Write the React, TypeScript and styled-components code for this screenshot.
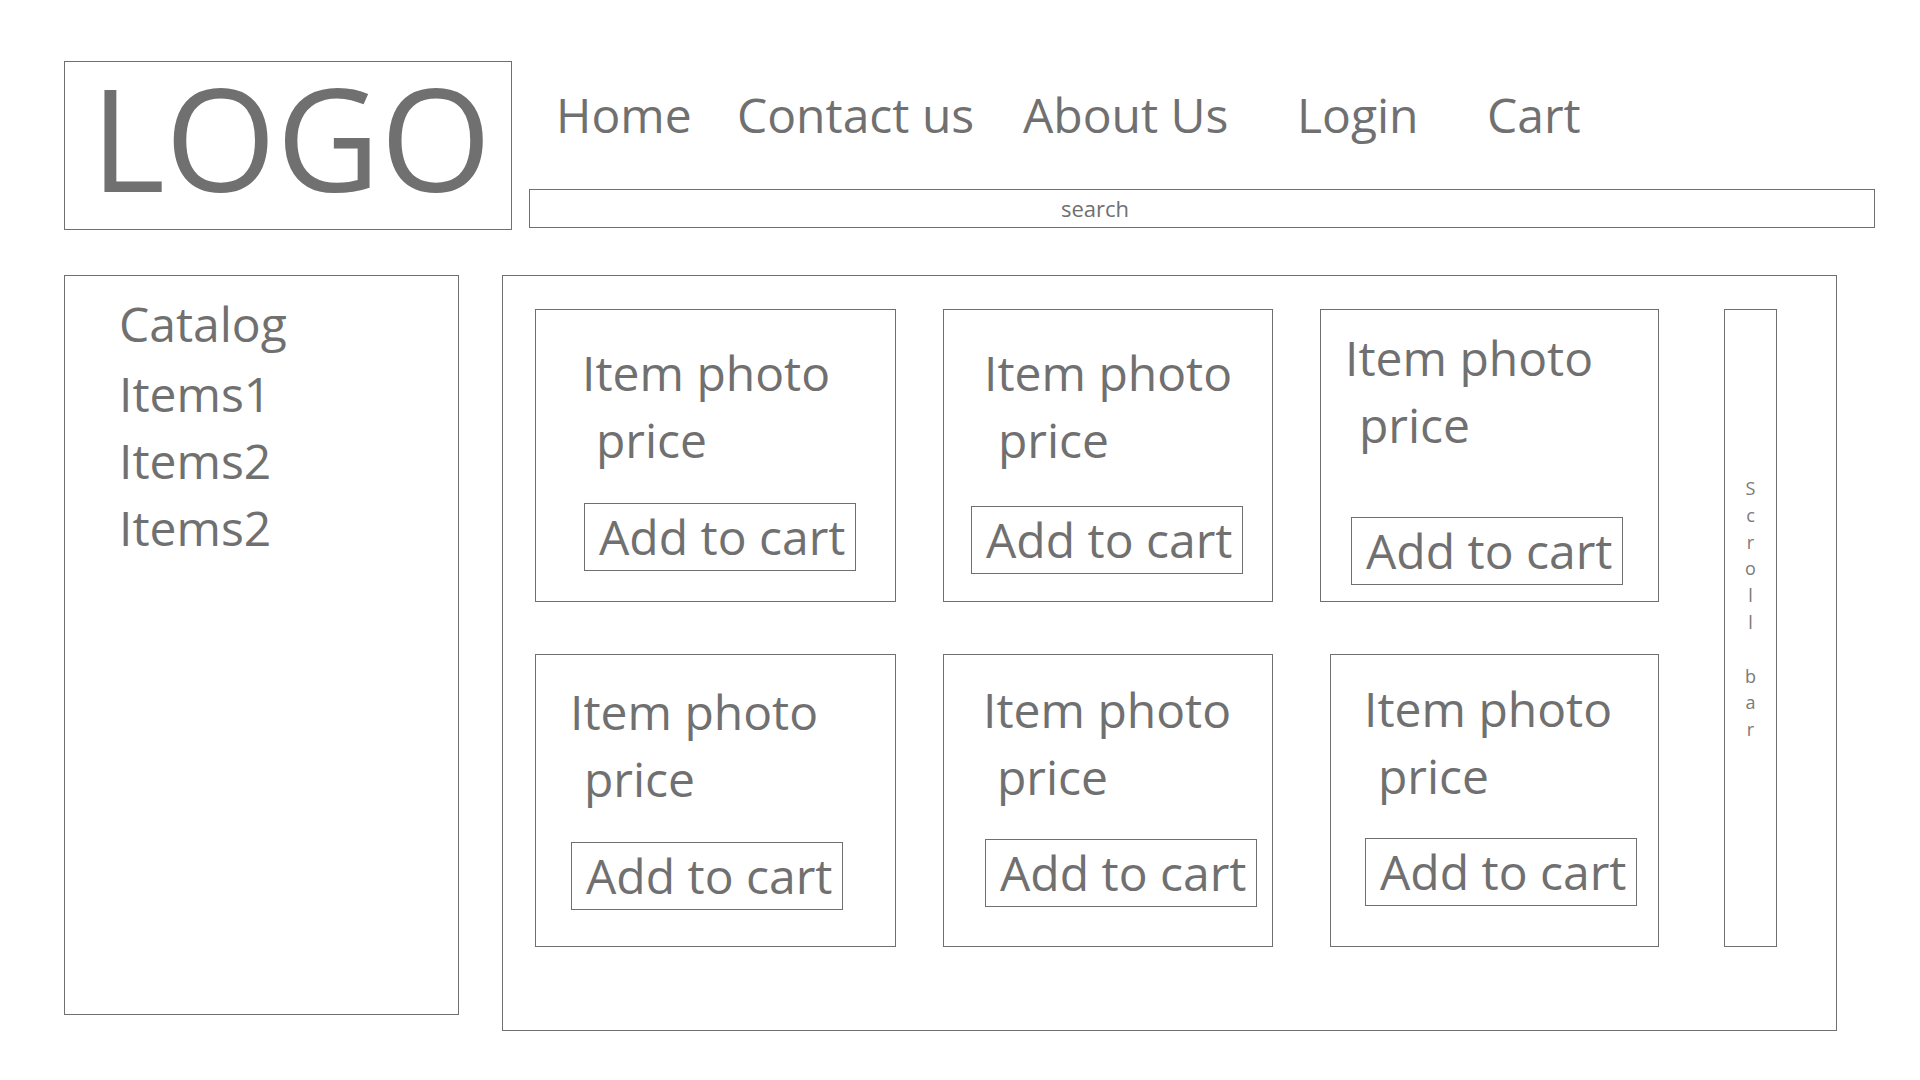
import { createGlobalStyle } from 'styled-components';
import styled from 'styled-components';

const INK = '#707070';
const FONT = '"Open Sans", "Noto Sans", "Liberation Sans", sans-serif';

const GlobalStyle = createGlobalStyle`
  html, body {
    margin: 0;
    padding: 0;
    background: #ffffff;
  }
  body {
    font-family: ${FONT};
    color: ${INK};
  }
  * {
    box-sizing: border-box;
  }
`;

const Page = styled.div`
  width: 1920px;
  height: 1080px;
  padding: 61px 0 0 64px;
  overflow: hidden;
`;

const Header = styled.header`
  display: flex;
  height: 169px;
`;

const LogoBox = styled.div`
  width: 448px;
  height: 169px;
  border: 1px solid ${INK};
  display: flex;
  align-items: center;
  justify-content: center;
  padding: 0 0 18px 6px;
  font-size: 143px;
  line-height: 1;
`;

const HeaderRight = styled.div`
  margin-left: 17px;
  width: 1346px;
  display: flex;
  flex-direction: column;
`;

const Nav = styled.nav`
  display: flex;
  margin-top: 20px;
  padding-left: 27px;
`;

const NavLink = styled.a<{ $w: number }>`
  width: ${p => p.$w}px;
  flex: none;
  font-size: 48px;
  line-height: 67px;
  color: ${INK};
  text-decoration: none;
  white-space: nowrap;
`;

const Search = styled.div`
  margin-top: 41px;
  height: 39px;
  border: 1px solid ${INK};
  padding-left: 531px;
  font-size: 22px;
  line-height: 36px;
`;

const Body = styled.div`
  display: flex;
  align-items: flex-start;
  margin-top: 45px;
`;

const Sidebar = styled.aside`
  width: 395px;
  height: 740px;
  border: 1px solid ${INK};
  padding: 14px 0 0 54px;
`;

const CatalogItem = styled.div<{ $head?: boolean }>`
  font-size: 48px;
  line-height: 67px;
  margin-bottom: ${p => (p.$head ? 3 : 0)}px;
`;

const MainPanel = styled.main`
  margin-left: 43px;
  width: 1335px;
  height: 756px;
  border: 1px solid ${INK};
  padding: 33px 0 0 32px;
  display: flex;
  align-items: flex-start;
`;

const CardGrid = styled.div`
  display: grid;
  grid-template-columns: 361px 330px 339px;
  grid-auto-rows: 293px;
  column-gap: 47px;
  row-gap: 52px;
`;

const Card = styled.div<{ $w?: number }>`
  width: ${p => (p.$w ? `${p.$w}px` : 'auto')};
  justify-self: ${p => (p.$w ? 'end' : 'stretch')};
  border: 1px solid ${INK};
  display: flex;
  flex-direction: column;
  align-items: flex-start;
`;

const ItemText = styled.div<{ $tx: number; $ty: number }>`
  margin: ${p => p.$ty}px 0 0 ${p => p.$tx}px;
  font-size: 48px;
  line-height: 67px;
  white-space: nowrap;
`;

const Price = styled.div`
  padding-left: 14px;
`;

const AddButton = styled.button<{ $bx: number; $gap: number }>`
  margin: ${p => p.$gap}px 0 0 ${p => p.$bx}px;
  width: 272px;
  height: 68px;
  border: 1px solid ${INK};
  background: transparent;
  padding: 0 0 0 14px;
  font-family: ${FONT};
  font-size: 48px;
  line-height: 66px;
  color: ${INK};
  text-align: left;
  white-space: nowrap;
  cursor: pointer;
`;

const ScrollBar = styled.div`
  margin-left: 65px;
  width: 53px;
  height: 638px;
  border: 1px solid ${INK};
  padding-top: 165px;
  display: flex;
  flex-direction: column;
  align-items: center;
`;

const ScrollLetter = styled.span`
  display: block;
  font-size: 18px;
  line-height: 26.8px;
  height: 26.8px;
  color: #7a7a7a;
`;

const NAV = [
  { label: 'Home', w: 181 },
  { label: 'Contact us', w: 286 },
  { label: 'About Us', w: 274 },
  { label: 'Login', w: 190 },
  { label: 'Cart', w: 200 },
];

const CATALOG = ['Items1', 'Items2', 'Items2'];

// per-card offsets, measured from the wireframe (it was drawn by hand)
const CARDS = [
  { tx: 46, ty: 29, bx: 48, by: 193 },
  { tx: 40, ty: 29, bx: 27, by: 196 },
  { tx: 24, ty: 14, bx: 30, by: 207 },
  { tx: 34, ty: 23, bx: 35, by: 187 },
  { tx: 39, ty: 21, bx: 41, by: 184 },
  { tx: 33, ty: 20, bx: 34, by: 183, w: 329 },
];

export default function App() {
  return (
    <>
      <GlobalStyle />
      <Page>
        <Header>
          <LogoBox>LOGO</LogoBox>
          <HeaderRight>
            <Nav>
              {NAV.map(n => (
                <NavLink key={n.label} href="#" $w={n.w}>
                  {n.label}
                </NavLink>
              ))}
            </Nav>
            <Search>search</Search>
          </HeaderRight>
        </Header>

        <Body>
          <Sidebar>
            <CatalogItem $head>Catalog</CatalogItem>
            {CATALOG.map((c, i) => (
              <CatalogItem key={i}>{c}</CatalogItem>
            ))}
          </Sidebar>

          <MainPanel>
            <CardGrid>
              {CARDS.map((c, i) => (
                <Card key={i} $w={c.w}>
                  <ItemText $tx={c.tx} $ty={c.ty}>
                    <div>Item photo</div>
                    <Price>price</Price>
                  </ItemText>
                  <AddButton $bx={c.bx} $gap={c.by - c.ty - 134}>
                    Add to cart
                  </AddButton>
                </Card>
              ))}
            </CardGrid>
            <ScrollBar>
              {'Scroll bar'.split('').map((ch, i) => (
                <ScrollLetter key={i}>{ch === ' ' ? '\u00a0' : ch}</ScrollLetter>
              ))}
            </ScrollBar>
          </MainPanel>
        </Body>
      </Page>
    </>
  );
}
